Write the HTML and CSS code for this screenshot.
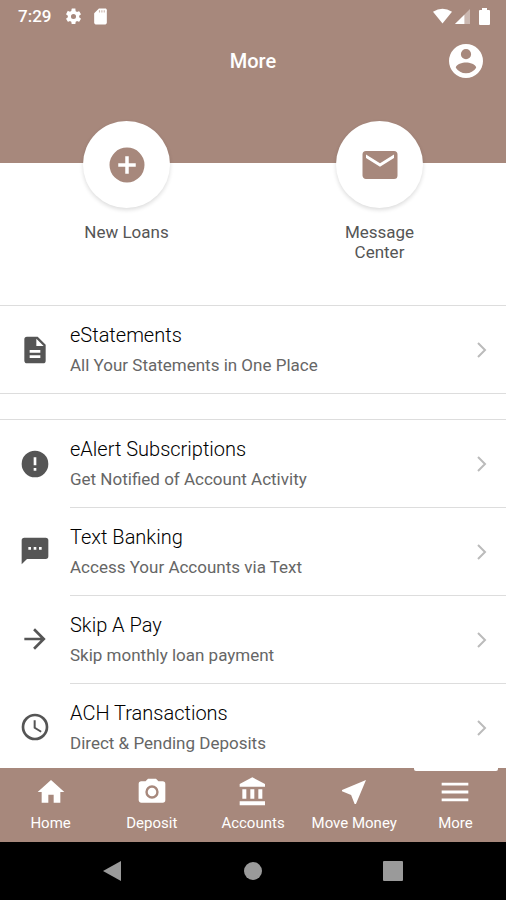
FILE: index.html
```html
<!DOCTYPE html>
<html lang="en">
<head>
  <meta charset="UTF-8">
  <meta name="viewport" content="width=device-width, initial-scale=1">
  <title>More</title>
  <link rel="stylesheet" href="styles.css">
</head>
<body>
  <header class="header">
    <div class="status-bar">
      <span class="time">7:29</span>
      <svg class="status-icon" viewBox="0 0 24 24"><path d="M19.14 12.94c.04-.3.06-.61.06-.94s-.02-.64-.07-.94l2.03-1.58a.49.49 0 0 0 .12-.61l-1.92-3.32a.49.49 0 0 0-.59-.22l-2.39.96a7 7 0 0 0-1.62-.94l-.36-2.54A.48.48 0 0 0 13.92 2h-3.84a.48.48 0 0 0-.47.41l-.36 2.54a7.3 7.3 0 0 0-1.62.94l-2.39-.96a.48.48 0 0 0-.59.22L2.74 8.87a.47.47 0 0 0 .12.61l2.03 1.58a6.2 6.2 0 0 0 0 1.88l-2.03 1.58a.49.49 0 0 0-.12.61l1.92 3.32c.12.22.37.29.59.22l2.39-.96c.5.38 1.03.7 1.62.94l.36 2.54c.05.24.24.41.48.41h3.84c.24 0 .44-.17.47-.41l.36-2.54a7 7 0 0 0 1.62-.94l2.39.96c.22.08.47 0 .59-.22l1.92-3.32a.47.47 0 0 0-.12-.61zM12 15.2a3.2 3.2 0 1 1 0-6.4 3.2 3.2 0 0 1 0 6.4z"/></svg>
      <svg class="status-icon" viewBox="0 0 24 24"><path d="M18 2h-8L4 8v12c0 1.100.9 2 2 2h12c1.100 0 2-.9 2-2V4c0-1.100-.9-2-2-2z"/><path class="cut" d="M10 4h1.500v3H10zM13 4h1.500v3H13zM16 4h1.500v3H16z"/></svg>
      <div class="status-right">
        <svg class="wifi" viewBox="0 0 20 16"><path d="M0 3.500Q10-3 20 3.500L10 16z"/></svg>
        <svg class="signal" viewBox="0 0 16 16"><path opacity=".4" d="M16 0v16H0z"/><path d="M10 6v10H0z"/></svg>
        <svg class="battery" viewBox="0 0 11 17"><path d="M3 0h5v2h2q1 0 1 1v13q0 1-1 1H1q-1 0-1-1V3q0-1 1-1h2z"/></svg>
      </div>
    </div>
    <div class="title-bar">
      <h1>More</h1>
      <button class="profile" type="button" aria-label="Profile">
        <svg viewBox="2 2 20 20"><path fill-rule="evenodd" d="M12 2a10 10 0 1 0 0 20 10 10 0 0 0 0-20zm0 3a3 3 0 1 1 0 6 3 3 0 0 1 0-6zm0 14.200A7.200 7.200 0 0 1 6 15.980c.03-1.990 4-3.080 6-3.080s5.970 1.090 6 3.080a7.200 7.200 0 0 1-6 3.220z"/></svg>
      </button>
    </div>
  </header>

  <main>
    <div class="shortcuts">
      <a class="shortcut" href="#loans">
        <span class="circle"><svg viewBox="0 0 24 24"><path d="M12 2a10 10 0 1 0 0 20 10 10 0 0 0 0-20zm5 11h-4v4h-2v-4H7v-2h4V7h2v4h4z"/></svg></span>
        <span class="shortcut-label">New Loans</span>
      </a>
      <a class="shortcut" href="#messages">
        <span class="circle"><svg viewBox="0 0 24 24"><path d="M20 4H4a2 2 0 0 0-2 2v12c0 1.100.9 2 2 2h16a2 2 0 0 0 2-2V6a2 2 0 0 0-2-2zm0 4-8 5-8-5V6l8 5 8-5z"/></svg></span>
        <span class="shortcut-label">Message Center</span>
      </a>
    </div>

    <div class="list">
      <a class="row" href="#estatements">
        <svg class="row-icon" viewBox="0 0 24 24"><path d="M14 2H6a2 2 0 0 0-2 2v16c0 1.100.9 2 2 2h12a2 2 0 0 0 2-2V8zm2 16H8v-2h8zm0-4H8v-2h8zm-3-5V3.500L18.500 9z"/></svg>
        <span class="row-body">
          <span class="row-text"><span class="row-title">eStatements</span><span class="row-sub">All Your Statements in One Place</span></span>
          <svg class="chevron" viewBox="0 0 10 16"><path d="M1 1l7 7-7 7"/></svg>
        </span>
      </a>
    </div>

    <div class="list">
      <a class="row" href="#ealerts">
        <svg class="row-icon" viewBox="0 0 24 24"><path d="M12 2a10 10 0 1 0 0 20 10 10 0 0 0 0-20zm1 15h-2v-2h2zm0-4h-2V7h2z"/></svg>
        <span class="row-body">
          <span class="row-text"><span class="row-title">eAlert Subscriptions</span><span class="row-sub">Get Notified of Account Activity</span></span>
          <svg class="chevron" viewBox="0 0 10 16"><path d="M1 1l7 7-7 7"/></svg>
        </span>
      </a>
      <a class="row" href="#text">
        <svg class="row-icon" viewBox="0 0 24 24"><path d="M20 2H4a2 2 0 0 0-2 2v18l4-4h14a2 2 0 0 0 2-2V4a2 2 0 0 0-2-2zM9 11H7V9h2zm4 0h-2V9h2zm4 0h-2V9h2z"/></svg>
        <span class="row-body">
          <span class="row-text"><span class="row-title">Text Banking</span><span class="row-sub">Access Your Accounts via Text</span></span>
          <svg class="chevron" viewBox="0 0 10 16"><path d="M1 1l7 7-7 7"/></svg>
        </span>
      </a>
      <a class="row" href="#skip">
        <svg class="row-icon" viewBox="0 0 24 24"><path d="M12 4l-1.410 1.410L16.170 11H4v2h12.170l-5.580 5.590L12 20l8-8z"/></svg>
        <span class="row-body">
          <span class="row-text"><span class="row-title">Skip A Pay</span><span class="row-sub">Skip monthly loan payment</span></span>
          <svg class="chevron" viewBox="0 0 10 16"><path d="M1 1l7 7-7 7"/></svg>
        </span>
      </a>
      <a class="row" href="#ach">
        <svg class="row-icon" viewBox="0 0 24 24"><path d="M11.990 2a10 10 0 1 0 .02 20 10 10 0 0 0-.02-20zM12 20a8 8 0 1 1 0-16 8 8 0 0 1 0 16zm.5-13H11v6l5.250 3.150.75-1.230-4.500-2.670z"/></svg>
        <span class="row-body">
          <span class="row-text"><span class="row-title">ACH Transactions</span><span class="row-sub">Direct &amp; Pending Deposits</span></span>
          <svg class="chevron" viewBox="0 0 10 16"><path d="M1 1l7 7-7 7"/></svg>
        </span>
      </a>
    </div>
  </main>

  <nav class="tabs">
    <a class="tab" href="#home">
      <svg viewBox="0 0 24 24"><path d="M10 20v-6h4v6h5v-8h3L12 3 2 12h3v8z"/></svg>
      <span>Home</span>
    </a>
    <a class="tab" href="#deposit">
      <svg viewBox="0 0 24 24"><circle cx="12" cy="12" r="3.200"/><path d="M9 2 7.170 4H4a2 2 0 0 0-2 2v12c0 1.100.9 2 2 2h16a2 2 0 0 0 2-2V6a2 2 0 0 0-2-2h-3.170L15 2zm3 15a5 5 0 1 1 0-10 5 5 0 0 1 0 10z"/></svg>
      <span>Deposit</span>
    </a>
    <a class="tab" href="#accounts">
      <svg viewBox="0 0 24 24"><path d="M4 10v7h3v-7zm6 0v7h3v-7zM2 22h19v-3H2zm14-12v7h3v-7zm-4.500-9L2 6v2h19V6z"/></svg>
      <span>Accounts</span>
    </a>
    <a class="tab" href="#move">
      <svg viewBox="0 0 24 24"><path d="M21 3 3 10.530v.98l6.840 2.650L12.480 21h.98z"/></svg>
      <span>Move Money</span>
    </a>
    <a class="tab active" href="#more">
      <svg viewBox="0 0 24 24"><path d="M2 19h20v-2.200H2zm0-5.900h20v-2.200H2zM2 5v2.200h20V5z"/></svg>
      <span>More</span>
    </a>
  </nav>

  <div class="system-bar">
    <button type="button" aria-label="Back"><svg viewBox="0 0 20 20"><path d="M18 0v20L0 10z"/></svg></button>
    <button type="button" aria-label="Home"><svg viewBox="0 0 20 20"><circle cx="10" cy="10" r="9"/></svg></button>
    <button type="button" aria-label="Recent apps"><svg viewBox="0 0 20 20"><rect x="0" y="0" width="20" height="20" rx="1"/></svg></button>
  </div>
</body>
</html>
```
FILE: styles.css
```css
* {
  box-sizing: border-box;
}
body {
  margin: 0;
  height: 100vh;
  display: flex;
  flex-direction: column;
  overflow: hidden;
  font-family: Roboto, sans-serif;
  background: #fff;
}
a {
  color: inherit;
  text-decoration: none;
}
svg {
  display: block;
  fill: currentColor;
}
button {
  padding: 0;
  border: none;
  background: none;
  color: inherit;
  cursor: pointer;
}

/* header */
.header {
  flex: none;
  background: #a7887c;
  color: #fff;
}
.status-bar {
  display: flex;
  align-items: center;
  height: 32px;
  padding: 0 16px 0 18px;
}
.time {
  margin-right: 13px;
  font-size: 17px;
  font-weight: 500;
}
.status-icon {
  width: 19px;
  height: 19px;
  margin-right: 8px;
}
.cut {
  fill: #cdb9b1;
}
.status-right {
  display: flex;
  align-items: center;
  margin-left: auto;
}
.wifi {
  width: 19px;
  height: 16px;
  margin-right: 3px;
}
.signal {
  width: 15px;
  height: 15px;
  margin-right: 9px;
}
.battery {
  width: 11px;
  height: 17px;
}
.title-bar {
  display: grid;
  grid-template-columns: 1fr auto 1fr;
  align-items: center;
  height: 51px;
  padding: 7px 23px 0 23px;
}
.title-bar h1 {
  grid-column: 2;
  margin: 0;
  font-size: 20px;
  line-height: 24px;
  font-weight: 500;
}
.profile {
  justify-self: end;
}
.profile svg {
  width: 34px;
  height: 34px;
}

/* main */
main {
  flex: 1;
  min-height: 0;
  overflow-y: auto;
  scrollbar-width: none;
}
.shortcuts {
  display: flex;
  height: 222px;
  padding-top: 38px;
  background: linear-gradient(#a7887c 80px, #fff 80px);
}
.shortcut {
  flex: 1;
  display: flex;
  flex-direction: column;
  align-items: center;
}
.circle {
  display: flex;
  align-items: center;
  justify-content: center;
  width: 87px;
  height: 87px;
  margin-bottom: 14px;
  border-radius: 50%;
  background: #fff;
  color: #a7887c;
  box-shadow: 0 2px 4px rgba(0,0,0,0.14);
}
.circle svg {
  width: 42px;
  height: 42px;
}
.shortcut-label {
  width: 90px;
  color: #555;
  font-size: 17px;
  line-height: 20px;
  text-align: center;
}
.list {
  margin-bottom: 25px;
  border-top: 1px solid #ddd;
  border-bottom: 1px solid #ddd;
}
.row {
  display: flex;
  align-items: center;
  color: #555;
}
.row-icon {
  flex: none;
  width: 32px;
  height: 32px;
  margin: 0 16px 0 19px;
}
.row-body {
  flex: 1;
  display: flex;
  align-items: center;
  height: 87px;
  margin-left: 3px;
  padding-right: 19px;
}
.row + .row .row-body {
  height: 88px;
  border-top: 1px solid #ddd;
}
.row-text {
  flex: 1;
}
.row-title,
.row-sub {
  display: block;
}
.row-title {
  margin-bottom: 5px;
  color: #000;
  font-size: 20px;
  font-weight: 300;
  line-height: 26px;
}
.row-sub {
  color: #666;
  font-size: 17px;
  line-height: 24px;
}
.chevron {
  width: 10px;
  height: 16px;
  fill: none;
  stroke: #bbb;
  stroke-width: 2;
}

/* bottom tabs */
.tabs {
  flex: none;
  display: flex;
  height: 74px;
  background: #a7887c;
  color: #fff;
}
.tab {
  flex: 1 1 0;
  display: flex;
  flex-direction: column;
  align-items: center;
  padding-top: 8px;
  font-size: 15px;
  line-height: 18px;
  white-space: nowrap;
  position: relative;
}
.tab svg {
  width: 32px;
  height: 32px;
  margin-bottom: 6px;
}
.tab.active::before {
  content: "";
  position: absolute;
  top: 0;
  left: 9px;
  right: 8px;
  height: 3px;
  border-radius: 0 0 2px 2px;
  background: #fff;
}

/* android navigation */
.system-bar {
  flex: none;
  display: flex;
  align-items: center;
  justify-content: center;
  gap: 120px;
  height: 58px;
  background: #000;
  color: #9a9a9a;
}
.system-bar svg {
  width: 20px;
  height: 20px;
}
```
